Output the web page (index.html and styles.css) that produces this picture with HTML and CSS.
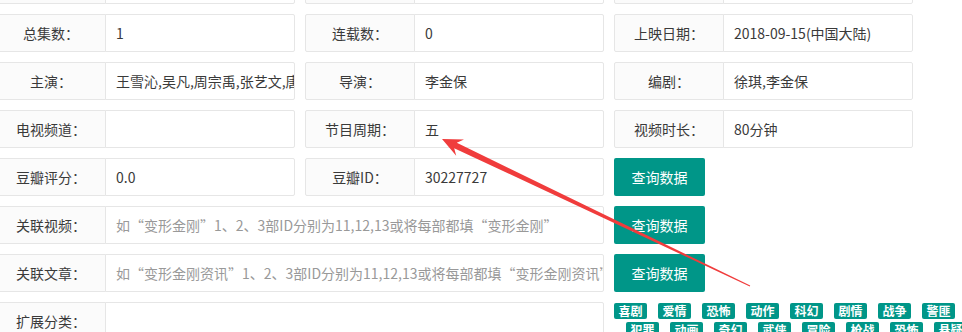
FILE: index.html
```html
<!DOCTYPE html>
<html lang="zh-CN">
<head>
    <meta charset="UTF-8">
    <title>影片资料编辑</title>
    <link rel="stylesheet" href="styles.css">
</head>
<body>
<div class="page">
    <form class="form">
        <div class="row">
            <div class="item"><label class="label"></label><input class="input" type="text"></div>
            <div class="item"><label class="label"></label><input class="input" type="text"></div>
            <div class="item"><label class="label"></label><input class="input" type="text"></div>
        </div>
        <div class="row">
            <div class="item"><label class="label">总集数：</label><input class="input" type="text" value="1"></div>
            <div class="item"><label class="label">连载数：</label><input class="input" type="text" value="0"></div>
            <div class="item"><label class="label">上映日期：</label><input class="input" type="text" value="2018-09-15(中国大陆)"></div>
        </div>
        <div class="row">
            <div class="item"><label class="label">主演：</label><input class="input" type="text" value="王雪沁,吴凡,周宗禹,张艺文,唐曾,李金保"></div>
            <div class="item"><label class="label">导演：</label><input class="input" type="text" value="李金保"></div>
            <div class="item"><label class="label">编剧：</label><input class="input" type="text" value="徐琪,李金保"></div>
        </div>
        <div class="row">
            <div class="item"><label class="label">电视频道：</label><input class="input" type="text"></div>
            <div class="item"><label class="label">节目周期：</label><input class="input" type="text" value="五"></div>
            <div class="item"><label class="label">视频时长：</label><input class="input" type="text" value="80分钟"></div>
        </div>
        <div class="row">
            <div class="item"><label class="label">豆瓣评分：</label><input class="input" type="text" value="0.0"></div>
            <div class="item"><label class="label">豆瓣ID：</label><input class="input" type="text" value="30227727"></div>
            <button class="btn" type="button">查询数据</button>
        </div>
        <div class="row">
            <div class="item"><label class="label">关联视频：</label><input class="input wide" type="text" placeholder="如“变形金刚”1、2、3部ID分别为11,12,13或将每部都填“变形金刚”"></div>
            <button class="btn" type="button">查询数据</button>
        </div>
        <div class="row">
            <div class="item"><label class="label">关联文章：</label><input class="input wide" type="text" placeholder="如“变形金刚资讯”1、2、3部ID分别为11,12,13或将每部都填“变形金刚资讯”"></div>
            <button class="btn" type="button">查询数据</button>
        </div>
        <div class="row tall">
            <div class="item"><label class="label">扩展分类：</label><textarea class="input wide area"></textarea></div>
            <div class="tags">
                <div class="tag-line">
                    <span class="tag">喜剧</span><span class="tag">爱情</span><span class="tag">恐怖</span><span class="tag">动作</span>
                    <span class="tag">科幻</span><span class="tag">剧情</span><span class="tag">战争</span><span class="tag">警匪</span>
                </div>
                <div class="tag-line second">
                    <span class="tag">犯罪</span><span class="tag">动画</span><span class="tag">奇幻</span><span class="tag">武侠</span>
                    <span class="tag">冒险</span><span class="tag">枪战</span><span class="tag">恐怖</span><span class="tag">悬疑</span>
                </div>
            </div>
        </div>
    </form>
    <!-- 标注箭头 -->
    <svg class="arrow" width="962" height="332" viewBox="0 0 962 332">
        <polygon points="442,139 464,139.5 456.8,142.8 750.2,285.5 749.8,286.5 454.2,148.2 456.2,155.7" fill="#f03c3c"/>
    </svg>
</div>
</body>
</html>
```

FILE: styles.css
```css
body {
    font-family: "Noto Sans CJK SC", "Liberation Sans", sans-serif;
    margin: 0;
    overflow: hidden;
    background: #fff;
}
.page {
    position: relative;
    width: 962px;
    height: 332px;
    overflow: hidden;
}
.form {
    display: flex;
    flex-direction: column;
    gap: 10px;
    margin-top: -34px;
    margin-left: -4px;
}
.row {
    display: flex;
    gap: 10px;
    height: 38px;
}
.row.tall {
    height: 80px;
}
.item {
    display: flex;
}
.label {
    width: 110px;
    height: 38px;
    box-sizing: border-box;
    border: 1px solid #e6e6e6;
    border-radius: 2px 0 0 2px;
    background-color: #fbfbfb;
    color: #3a3a3a;
    font-size: 14px;
    line-height: 36px;
    text-align: center;
}
.input {
    width: 190px;
    height: 38px;
    box-sizing: border-box;
    margin: 0 0 0 -1px;
    padding: 0 0 0 10px;
    border: 1px solid #e6e6e6;
    border-radius: 0 2px 2px 0;
    background-color: #fff;
    color: #3a3a3a;
    font-family: inherit;
    font-size: 14px;
    outline: none;
}
.input::placeholder {
    color: #999;
}
.input.wide {
    width: 499px;
}
.input.area {
    height: 80px;
    resize: none;
}
.btn {
    width: 91px;
    height: 38px;
    border: none;
    border-radius: 2px;
    background-color: #009688;
    color: #fff;
    font-family: inherit;
    font-size: 14px;
    cursor: pointer;
}
.tags {
    display: flex;
    flex-direction: column;
    gap: 3px;
    padding-top: 1px;
    white-space: nowrap;
}
.tag-line {
    display: flex;
    gap: 11px;
}
.tag-line.second {
    margin-left: 12px;
}
.tag {
    width: 33px;
    height: 16px;
    border-radius: 2px;
    background-color: #009688;
    color: #fff;
    font-size: 12px;
    font-weight: bold;
    line-height: 16px;
    text-align: center;
}
.arrow {
    position: absolute;
    top: 0;
    left: 0;
    pointer-events: none;
}
```
